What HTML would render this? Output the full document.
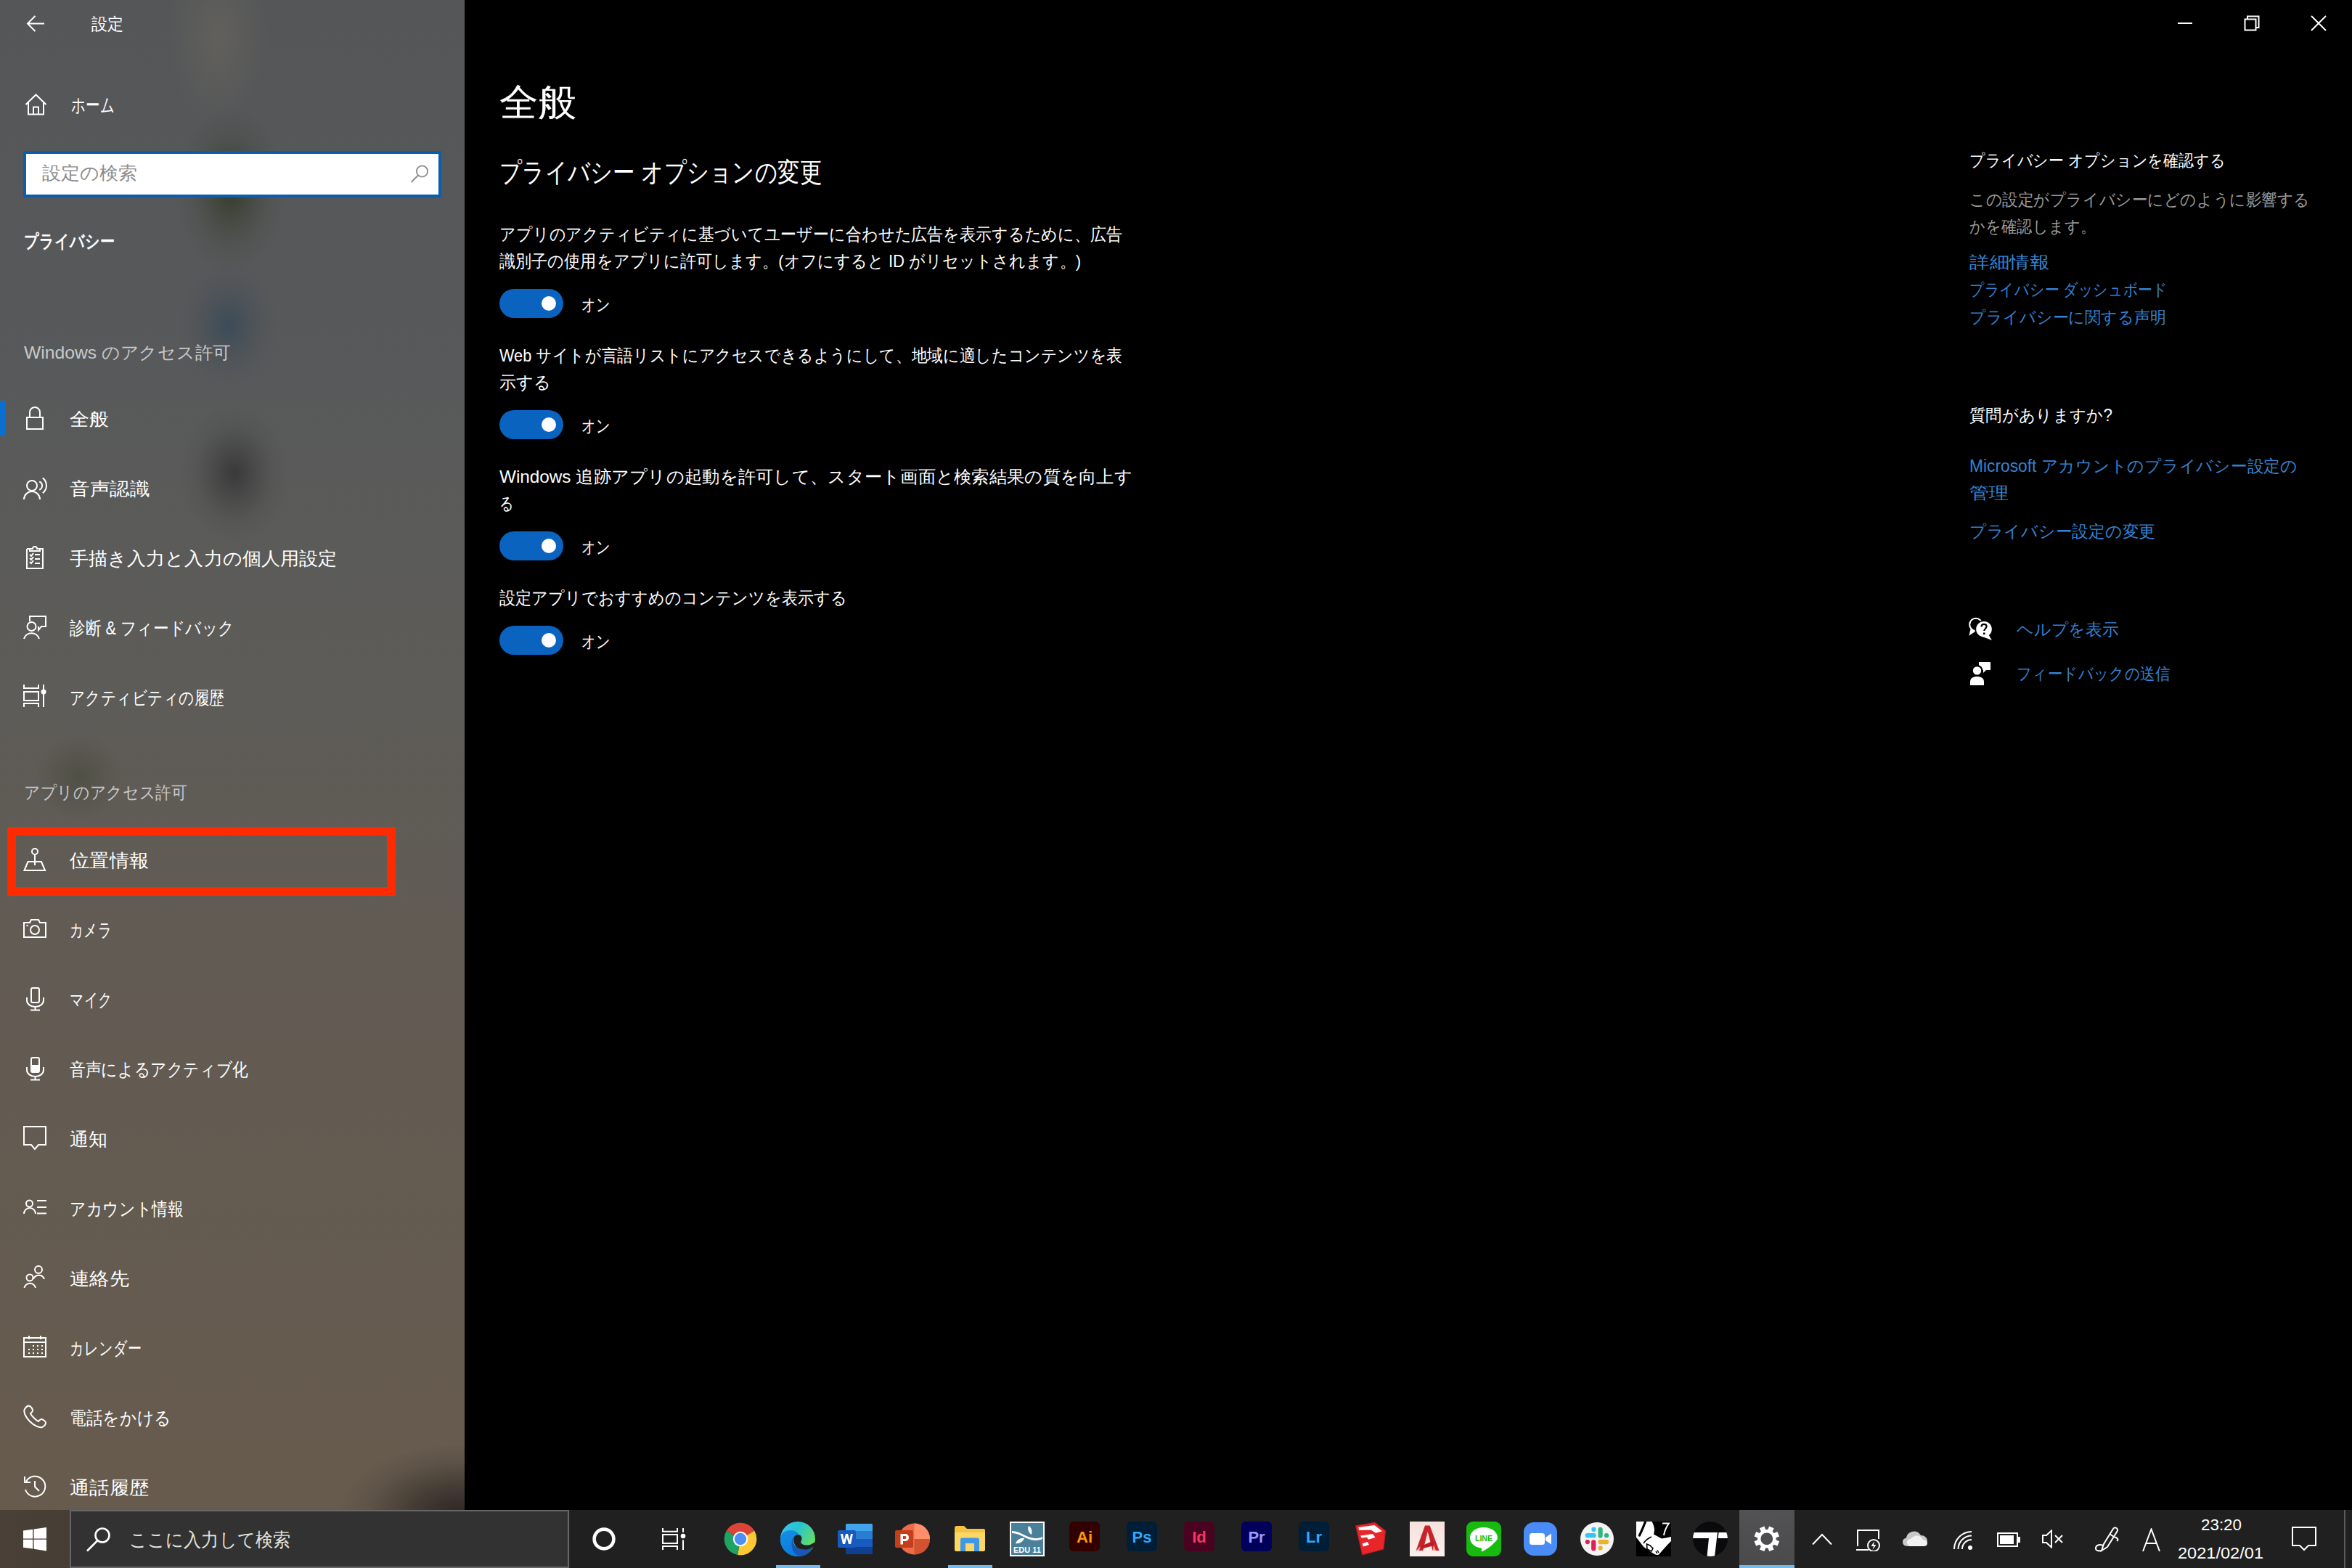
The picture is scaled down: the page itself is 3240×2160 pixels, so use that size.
<!DOCTYPE html>
<html lang="ja">
<head>
<meta charset="utf-8">
<title>設定</title>
<style>
*{margin:0;padding:0;box-sizing:border-box}
html,body{width:3240px;height:2160px;overflow:hidden;background:#000}
body{font-family:"Liberation Sans",sans-serif;color:#fff;position:relative}
.abs{position:absolute}
.t{position:absolute;white-space:nowrap;transform-origin:0 50%}
#sidebar{position:absolute;left:0;top:0;width:640px;height:2080px;overflow:hidden;
background:
radial-gradient(ellipse 75px 115px at 318px 262px, rgba(44,52,30,.75), rgba(44,52,30,.35) 40%, rgba(44,52,30,.1) 70%, rgba(44,52,30,0)),
radial-gradient(ellipse 72px 90px at 315px 448px, rgba(38,64,86,.55), rgba(38,64,86,.25) 40%, rgba(38,64,86,.08) 70%, rgba(38,64,86,0)),
radial-gradient(ellipse 75px 95px at 323px 652px, rgba(36,36,36,.6), rgba(36,36,36,.28) 40%, rgba(36,36,36,.08) 70%, rgba(36,36,36,0)),
radial-gradient(ellipse 60px 60px at 108px 1070px, rgba(58,62,42,.4), rgba(58,62,42,0)),
radial-gradient(ellipse 70px 120px at 300px 50px, rgba(122,114,96,.35), rgba(122,114,96,0)),
radial-gradient(ellipse 170px 100px at 635px 2088px, rgba(40,35,32,.95), rgba(40,35,32,.55) 40%, rgba(40,35,32,.15) 75%, rgba(40,35,32,0)),
linear-gradient(180deg,#545658 0%,#58595a 25%,#5d5c58 45%,#625b53 65%,#675b4d 100%);
}
#main{position:absolute;left:640px;top:0;width:2600px;height:2080px;background:#000}
#taskbar{position:absolute;left:0;top:2080px;width:3240px;height:80px;
background:linear-gradient(90deg,#4a4037 0px,#463d35 96px,#2a2724 784px,#202020 786px,#202020 100%)}
.tog{position:absolute;left:688px;width:88px;height:40px;border-radius:20px;background:#0b63c0}
.tog::after{content:"";position:absolute;left:58px;top:10px;width:20px;height:20px;border-radius:50%;background:#fff}
</style>
</head>
<body>
<div id="sidebar"></div>
<div id="main"></div>
<div id="taskbar"></div>
<div class="abs" style="left:32px;top:208px;width:576px;height:64px;background:#fff;border:4px solid #0a5ead"></div>
<svg class="abs" style="left:562px;top:225px" width="30" height="30" viewBox="0 0 30 30" ><circle cx="19.5" cy="11" r="7.6" stroke="#8a8a8a" fill="none" stroke-width="1.8"/><path d="M14,16.5 L4.5,26" stroke="#8a8a8a" stroke-width="1.8"/></svg>
<div class="abs" style="left:0;top:552px;width:8px;height:48px;background:#0b6fcf"></div>
<div class="abs" style="left:10px;top:1139px;width:535px;height:95px;border:12px solid #ff2a00"></div>
<svg class="abs" style="left:36px;top:21px" width="25" height="23" viewBox="0 0 25 23" ><path stroke="#fff" fill="none" stroke-width="2" d="M25,11.5 H2 M12.5,1 L2,11.5 L12.5,22"/></svg>
<svg class="abs" style="left:34px;top:129px" width="31" height="30" viewBox="0 0 31 30" ><path stroke="#fff" fill="none" stroke-width="2" stroke-width="2.6" d="M1.5,15 L15.5,1.5 L29.5,15 M5,11.5 V28.5 H26 V11.5 M12,28.5 V18.5 H19 V28.5"/></svg>
<svg class="abs" style="left:32px;top:560px" width="32" height="33" viewBox="0 0 32 33" ><rect stroke="#fff" fill="none" stroke-width="2" x="5" y="15" width="22" height="16"/><path stroke="#fff" fill="none" stroke-width="2" d="M9,15 V8 A7,7 0 0 1 23,8 V15"/></svg>
<svg class="abs" style="left:32px;top:656px" width="34" height="34" viewBox="0 0 34 34" ><circle stroke="#fff" fill="none" stroke-width="2" cx="12" cy="13" r="7"/><path stroke="#fff" fill="none" stroke-width="2" d="M1,32 A11,11 0 0 1 23,32"/><path stroke="#fff" fill="none" stroke-width="2" d="M22.2,7.5 A6,6 0 0 1 22.2,18.7 M26.8,2.4 A13.2,13.2 0 0 1 26.8,23.3"/></svg>
<svg class="abs" style="left:32px;top:752px" width="32" height="33" viewBox="0 0 32 33" ><path stroke="#fff" fill="none" stroke-width="2" d="M5,4 H9 M23,4 H27 V31 H5 V4"/><path stroke="#fff" fill="none" stroke-width="2" d="M9,7 V4 H13 A3,3 0 0 1 19,4 H23 V7 Z"/><path stroke="#fff" fill="none" stroke-width="2" d="M9,12 L11,14 L14,10 M9,17 L11,19 L14,15 M9,22 L11,24 L14,20 M16,12 H23 M16,18 H23 M16,24 H23"/></svg>
<svg class="abs" style="left:32px;top:848px" width="32" height="33" viewBox="0 0 32 33" ><path stroke="#fff" fill="none" stroke-width="2" d="M9,8 V1 H31 V15 H25 L21,20 V15"/><circle stroke="#fff" fill="none" stroke-width="2" cx="11.5" cy="15" r="6"/><path stroke="#fff" fill="none" stroke-width="2" d="M1,32 A11,11 0 0 1 22,32"/></svg>
<svg class="abs" style="left:32px;top:943px" width="33" height="32" viewBox="0 0 33 32" ><path stroke="#fff" fill="none" stroke-width="2" d="M1,0 V5 H21 V0 M1,31 V26 H21 V31"/><rect stroke="#fff" fill="none" stroke-width="2" x="1" y="10" width="20" height="12"/><path stroke="#fff" fill="none" stroke-width="2" d="M28,0 V31"/><circle cx="28" cy="10" r="3.5" fill="#fff"/></svg>
<svg class="abs" style="left:32px;top:1167px" width="32" height="34" viewBox="0 0 32 34" ><circle stroke="#fff" fill="none" stroke-width="2" cx="16" cy="6" r="4"/><path stroke="#fff" fill="none" stroke-width="2" d="M16,10 V25"/><path stroke="#fff" fill="none" stroke-width="2" d="M1.5,32 H30 L25,20 H6.5 Z"/></svg>
<svg class="abs" style="left:32px;top:1264px" width="33" height="30" viewBox="0 0 33 30" ><path stroke="#fff" fill="none" stroke-width="2" d="M1,7 H9 L11,3 H21 L23,7 H31 V27 H1 Z"/><circle stroke="#fff" fill="none" stroke-width="2" cx="16" cy="17" r="6"/><circle cx="5.5" cy="11" r="1.2" fill="#fff"/></svg>
<svg class="abs" style="left:32px;top:1359px" width="32" height="34" viewBox="0 0 32 34" ><rect stroke="#fff" fill="none" stroke-width="2" x="11" y="2" width="11" height="20" rx="2"/><path stroke="#fff" fill="none" stroke-width="2" d="M5,15 V19 A11.5,9 0 0 0 28,19 V15 M16.5,28 V32 M10,32.5 H23"/></svg>
<svg class="abs" style="left:32px;top:1455px" width="32" height="34" viewBox="0 0 32 34" ><rect stroke="#fff" fill="none" stroke-width="2" x="11" y="2" width="11" height="20" rx="2"/><rect x="11" y="12" width="11" height="10" fill="#fff"/><path stroke="#fff" fill="none" stroke-width="2" d="M5,15 V19 A11.5,9 0 0 0 28,19 V15 M16.5,28 V32 M10,32.5 H23"/></svg>
<svg class="abs" style="left:32px;top:1551px" width="33" height="34" viewBox="0 0 33 34" ><path stroke="#fff" fill="none" stroke-width="2" d="M1,1 H31 V26 H21 L16,32 L11,26 H1 Z"/></svg>
<svg class="abs" style="left:32px;top:1646px" width="33" height="28" viewBox="0 0 33 28" ><circle stroke="#fff" fill="none" stroke-width="2" cx="8.5" cy="12" r="4.5"/><path stroke="#fff" fill="none" stroke-width="2" d="M1,26 A8,8 0 0 1 17,26"/><path stroke="#fff" fill="none" stroke-width="2" d="M19,8 H32 M19,17 H32 M19,25.5 H32"/></svg>
<svg class="abs" style="left:32px;top:1742px" width="32" height="33" viewBox="0 0 32 33" ><circle stroke="#fff" fill="none" stroke-width="2" cx="21" cy="7" r="5"/><path stroke="#fff" fill="none" stroke-width="2" d="M14,20 A8,8 0 0 1 29,20"/><circle stroke="#fff" fill="none" stroke-width="2" cx="9" cy="18" r="4.5"/><path stroke="#fff" fill="none" stroke-width="2" d="M1.5,32 A8,8 0 0 1 17,32"/></svg>
<svg class="abs" style="left:32px;top:1839px" width="33" height="32" viewBox="0 0 33 32" ><rect stroke="#fff" fill="none" stroke-width="2" x="1" y="4" width="30" height="26"/><path stroke="#fff" fill="none" stroke-width="2" d="M1,10 H31 M8,1 V6 M24,1 V6"/><rect x="7" y="19" width="2" height="2" fill="#fff"/><rect x="7" y="24" width="2" height="2" fill="#fff"/><rect x="13" y="14" width="2" height="2" fill="#fff"/><rect x="13" y="19" width="2" height="2" fill="#fff"/><rect x="13" y="24" width="2" height="2" fill="#fff"/><rect x="19" y="14" width="2" height="2" fill="#fff"/><rect x="19" y="19" width="2" height="2" fill="#fff"/><rect x="19" y="24" width="2" height="2" fill="#fff"/><rect x="25" y="14" width="2" height="2" fill="#fff"/><rect x="25" y="19" width="2" height="2" fill="#fff"/><rect x="25" y="24" width="2" height="2" fill="#fff"/></svg>
<svg class="abs" style="left:32px;top:1935px" width="33" height="34" viewBox="0 0 33 34" ><path stroke="#fff" fill="none" stroke-width="2" d="M9,2 C7,1 4,3 2,6 C0,10 3,17 9,23 C15,29 22,32 26,31 C29,30 31,27 31,25 C31,23 27,20 25,20 C23,20 22,22 21,23 C18,22 11,15 10,12 C11,11 13,10 13,8 C13,6 11,3 9,2 Z"/></svg>
<svg class="abs" style="left:32px;top:2031px" width="33" height="34" viewBox="0 0 33 34" ><path stroke="#fff" fill="none" stroke-width="2" d="M4,10 A14,14 0 1 1 3,21"/><path stroke="#fff" fill="none" stroke-width="2" d="M2,3 V11 H10"/><path stroke="#fff" fill="none" stroke-width="2" d="M16,9 V17 L22,23"/></svg>
<div class="abs" style="left:3000px;top:31px;width:20px;height:2px;background:#fff"></div>
<svg class="abs" style="left:3091px;top:21px" width="22" height="22" viewBox="0 0 22 22" ><path d="M5,5 V1.5 H20.5 V17 H17" stroke="#fff" fill="none" stroke-width="2"/><rect x="1.5" y="5.5" width="15" height="15" stroke="#fff" fill="none" stroke-width="2"/></svg>
<svg class="abs" style="left:3183px;top:21px" width="22" height="22" viewBox="0 0 22 22" ><path d="M1,1 L21,21 M21,1 L1,21" stroke="#fff" stroke-width="2"/></svg>
<div class="tog" style="top:398px"></div>
<div class="tog" style="top:565px"></div>
<div class="tog" style="top:732px"></div>
<div class="tog" style="top:862px"></div>
<svg class="abs" style="left:2700px;top:840px" width="60" height="110" viewBox="0 0 60 110" ><circle cx="21.8" cy="20.4" r="8.6" stroke="#fff" fill="none" stroke-width="2"/><path d="M15,25 L12.3,35.8 L21,30 Z" fill="#fff"/><circle cx="33" cy="26.7" r="12.5" fill="#000"/><circle cx="33" cy="26.7" r="10.8" fill="#fff"/><path d="M38,32 L43.9,42.1 L31,37 Z" fill="#fff"/><path d="M29.5,23.5 C29.5,21 31,19.8 33,19.8 C35,19.8 36.6,21 36.6,23 C36.6,25.5 33.5,26 33.3,29" stroke="#000" stroke-width="2.2" fill="none"/><rect x="32" y="31.5" width="2.6" height="2.6" fill="#000"/><path d="M26,72 H42 V83 H36 L32,87 V83 H26 Z" fill="#fff"/><circle cx="23.5" cy="83.9" r="8" fill="#000"/><circle cx="23.5" cy="83.9" r="5.7" fill="#fff"/><path d="M14,104 V99 C14,94.5 18,92 23.5,92 C29,92 33,94.5 33,99 V104 Z" fill="#fff"/></svg>
<svg class="abs" style="left:32px;top:2104px" width="32" height="33" viewBox="0 0 32 33" ><path fill="#fff" d="M0,4.6 L13.2,2.8 V15.4 H0 Z M14.6,2.6 L32,0 V15.4 H14.6 Z M0,16.8 H13.2 V29.6 L0,27.8 Z M14.6,16.8 H32 V32.4 L14.6,29.8 Z"/></svg>
<div class="abs" style="left:96px;top:2080px;width:688px;height:80px;background:#323232;border:2px solid #676767"></div>
<svg class="abs" style="left:118px;top:2103px" width="36" height="36" viewBox="0 0 36 36" ><circle cx="23" cy="12" r="9.5" stroke="#fff" fill="none" stroke-width="2.6"/><path d="M16,19.5 L2,33.5" stroke="#fff" stroke-width="2.6"/></svg>
<svg class="abs" style="left:814px;top:2102px" width="36" height="36" viewBox="0 0 36 36" ><circle cx="18" cy="18" r="13.4" stroke="#fff" fill="none" stroke-width="4.6"/></svg>
<svg class="abs" style="left:911px;top:2104px" width="34" height="33" viewBox="0 0 34 33" ><path stroke="#fff" fill="none" stroke-width="2" stroke-width="2.2" d="M2,1 V5.8 H22 V1 M2,31 V26 H22 V31"/><rect stroke="#fff" fill="none" stroke-width="2" stroke-width="2.2" x="2" y="10" width="20" height="12"/><path stroke="#fff" fill="none" stroke-width="2" stroke-width="2.1" d="M30,1 V6.8 M30,17.5 V31"/><circle cx="30" cy="12" r="3.3" fill="#fff"/></svg>
<svg class="abs" style="left:997px;top:2097px" width="46" height="46" viewBox="0 0 46 46" ><path d="M23,23 L3.69,11.85 A22.3,22.3 0 0 1 42.31,11.85 Z" fill="#db4437"/><path d="M23,23 L42.31,11.85 A22.3,22.3 0 0 1 19.1,45 Z" fill="#fcc934"/><path d="M23,23 L19.1,45 A22.3,22.3 0 0 1 3.69,11.85 Z" fill="#1ea362"/><circle cx="23" cy="23" r="10.2" fill="#fff"/><circle cx="23" cy="23" r="8.2" fill="#4e8ef5"/></svg>
<svg class="abs" style="left:1075px;top:2096px" width="48" height="48" viewBox="0 0 48 48" ><defs><linearGradient id="eg1" x1="0" y1="0" x2="1" y2="0.6"><stop offset="0" stop-color="#3cc4f4"/><stop offset=".45" stop-color="#27c3d2"/><stop offset="1" stop-color="#6ae25a"/></linearGradient><linearGradient id="eg2" x1="0" y1="0" x2="0.6" y2="1"><stop offset="0" stop-color="#1490e6"/><stop offset="1" stop-color="#0b78dc"/></linearGradient></defs><circle cx="24" cy="24" r="24" fill="url(#eg1)"/><path d="M0.3,21 C2,15 8,12 14,12 C20,12 24,15 26,18.5 L19,21 C16,27 18,34 25,37 C32,40 40,38 44,36 C40,44 32,48 24,48 C11,48 0,38 0,25 Z" fill="url(#eg2)"/><path d="M19,21 C16,27 18,34 25,37 C32,40 40,38 44,36 C40,44 33,47.5 27,47.8 C20,46 16,40 15.5,32 C15.3,27 16.5,23 19,21 Z" fill="#1757b8"/><path d="M18.3,24.5 C18.3,20.5 21,18.3 24.3,18.3 C27.5,18.3 29.5,20.5 29.5,23.5 C29.5,26 27.8,27.2 28.3,29 C29.2,31.5 33,32.6 36,32.6 C40,32.6 43,31.5 46.5,29 L50,27 L50,39 L44.5,35.5 C40,38.5 32,40 25,37 C20.5,35 18.3,30 18.3,24.5 Z" fill="#202020"/></svg>
<div class="abs" style="left:1069px;top:2156px;width:61px;height:4px;background:#76b9ed"></div>
<svg class="abs" style="left:1153px;top:2098px" width="50" height="44" viewBox="0 0 50 44" ><rect x="12" y="1" width="37" height="42" rx="2" fill="#2b6fd6"/><rect x="12" y="1" width="37" height="11" rx="2" fill="#41a5ee"/><rect x="12" y="11" width="37" height="11" fill="#2b7cd3"/><rect x="12" y="22" width="37" height="11" fill="#185abd"/><rect x="12" y="33" width="37" height="10" fill="#103f91"/><rect x="1" y="10" width="25" height="24" rx="2" fill="#185abd"/><path d="M5,15 L8,29 H11 L13.5,20 L16,29 H19 L22,15 H19 L17.3,24 L15,15 H12 L9.7,24 L8,15 Z" fill="#fff"/></svg>
<svg class="abs" style="left:1232px;top:2098px" width="50" height="44" viewBox="0 0 50 44" ><circle cx="27.5" cy="22" r="21.5" fill="#ed6c47"/><path d="M27.5,0.5 A21.5,21.5 0 0 1 49,22 H27.5 Z" fill="#ff8f6b"/><path d="M49,22 A21.5,21.5 0 0 1 27.5,43.5 V22 Z" fill="#d35230"/><rect x="1" y="10" width="25" height="24" rx="2" fill="#c43e1c"/><path d="M8.5,15 H14.5 C18,15 20,17 20,20 C20,23 18,25 14.5,25 H12 V29.5 H8.5 Z M12,18 V22 H14.3 C15.7,22 16.5,21.3 16.5,20 C16.5,18.7 15.7,18 14.3,18 Z" fill="#fff"/></svg>
<svg class="abs" style="left:1314px;top:2101px" width="44" height="37" viewBox="0 0 44 37" ><path d="M1,4 C1,2 2,1 4,1 H14 L18,5 H41 C42.5,5 43,6 43,7.5 V33 C43,35 42,36 40,36 H4 C2,36 1,35 1,33 Z" fill="#f5c242"/><path d="M1,10 H43 V33 C43,35 42,36 40,36 H4 C2,36 1,35 1,33 Z" fill="#fcd766"/><path d="M9,36 V20 C9,18.5 10,17.5 11.5,17.5 H32.5 C34,17.5 35,18.5 35,20 V36 H28 V25 H16 V36 Z" fill="#3e98e6"/></svg>
<div class="abs" style="left:1306px;top:2156px;width:61px;height:4px;background:#76b9ed"></div>
<svg class="abs" style="left:1391px;top:2096px" width="48" height="48" viewBox="0 0 48 48" ><rect x="1" y="1" width="46" height="46" fill="#4b809b" stroke="#fff" stroke-width="2"/><path d="M3,13 C15,13 22,22 34,23 C40,23.5 43,22 45,21 V24 C42,25.5 38,26 34,26 C22,25 15,16 3,16 Z" fill="#fff"/><path d="M26,6 C30,8 31,13 30,18 C26,16 24,10 26,6 Z" fill="#fff"/><path d="M8,30 C10,25 15,22 20,23 C18,28 13,31 8,30 Z" fill="#fff"/><text x="24" y="43" font-family="Liberation Sans" font-size="11" font-weight="700" fill="#fff" text-anchor="middle">EDU 11</text></svg>
<svg class="abs" style="left:1473px;top:2096px" width="42" height="41" viewBox="0 0 42 41" ><rect x="0" y="0" width="42" height="41" rx="6" fill="#330000"/><text x="21" y="29" font-family="Liberation Sans" font-size="22" font-weight="700" fill="#ff9a00" text-anchor="middle">Ai</text></svg>
<svg class="abs" style="left:1552px;top:2096px" width="42" height="41" viewBox="0 0 42 41" ><rect x="0" y="0" width="42" height="41" rx="6" fill="#001e36"/><text x="21" y="29" font-family="Liberation Sans" font-size="22" font-weight="700" fill="#31a8ff" text-anchor="middle">Ps</text></svg>
<svg class="abs" style="left:1631px;top:2096px" width="42" height="41" viewBox="0 0 42 41" ><rect x="0" y="0" width="42" height="41" rx="6" fill="#49021f"/><text x="21" y="29" font-family="Liberation Sans" font-size="22" font-weight="700" fill="#ff3366" text-anchor="middle">Id</text></svg>
<svg class="abs" style="left:1710px;top:2096px" width="42" height="41" viewBox="0 0 42 41" ><rect x="0" y="0" width="42" height="41" rx="6" fill="#00005b"/><text x="21" y="29" font-family="Liberation Sans" font-size="22" font-weight="700" fill="#9999ff" text-anchor="middle">Pr</text></svg>
<svg class="abs" style="left:1789px;top:2096px" width="42" height="41" viewBox="0 0 42 41" ><rect x="0" y="0" width="42" height="41" rx="6" fill="#001e36"/><text x="21" y="29" font-family="Liberation Sans" font-size="22" font-weight="700" fill="#31a8ff" text-anchor="middle">Lr</text></svg>
<svg class="abs" style="left:1860px;top:2090px" width="50" height="54" viewBox="0 0 50 54" ><path d="M7.7,11.9 L33.9,7.4 L48.5,19 L45.8,44 L16.7,51.8 Z" fill="#e8262a"/><path d="M7.7,11.9 L33.9,7.4 L48.5,19 L45.8,44 L16.7,51.8 Z" fill="none" stroke="#b81d20" stroke-width="1.2"/><path d="M11.3,14 L33.3,11 L44,19.3 L35.1,21.7 L28.6,17.6 L12.2,17.9 Z M14.3,25.6 L31,22.9 L34.5,28 L25,30.7 L23.2,27.7 L15.5,28.6 Z M16.7,36.3 L23.8,33.9 L25.9,38.1 L17.9,40.5 Z" fill="#fff"/></svg>
<svg class="abs" style="left:1942px;top:2096px" width="48" height="48" viewBox="0 0 48 48" ><defs><linearGradient id="acg" x1="0" y1="0" x2="0" y2="1"><stop offset="0" stop-color="#f6e1dc"/><stop offset="1" stop-color="#fbefec"/></linearGradient></defs><rect width="48" height="48" fill="url(#acg)"/><path d="M8.6,40 L21,5.4 H27.6 L40.5,40 H31.5 L24.7,14 L18.3,40 Z" fill="#c8232b"/><path d="M15.5,34 L31,27 L33.5,33 L14.5,38 Z" fill="#b51f26"/><path d="M8.6,40 L13,40 L15,34 Z M31.5,40 H36 L33,32 Z" fill="#e8a39f"/></svg>
<svg class="abs" style="left:2020px;top:2096px" width="48" height="48" viewBox="0 0 48 48" ><rect width="48" height="48" rx="9" fill="#16bb0e"/><path d="M24,8 C13,8 5,14.5 5,22.5 C5,29.5 11,35 20,36.5 C21,36.7 21.5,37.5 21,39 C20.6,40.5 20.5,41.5 22,41 C25,40 33,35 37,30.5 C40.5,27.5 43,25 43,22.5 C43,14.5 35,8 24,8 Z" fill="#fff"/><text x="24" y="27" font-family="Liberation Sans" font-size="10.5" font-weight="700" fill="#16bb0e" text-anchor="middle">LINE</text></svg>
<svg class="abs" style="left:2099px;top:2097px" width="46" height="46" viewBox="0 0 46 46" ><rect width="46" height="46" rx="14" fill="#4a8cf6"/><rect x="8" y="15" width="21" height="16" rx="3.5" fill="#fff"/><path d="M30,21 L38,15.5 V30.5 L30,25 Z" fill="#fff"/></svg>
<svg class="abs" style="left:2177px;top:2097px" width="46" height="46" viewBox="0 0 46 46" ><circle cx="23" cy="23" r="23" fill="#f4f4f4"/><path d="M9.8,18.2 L18.6,18.2" stroke="#36c5f0" stroke-width="6.2" stroke-linecap="round"/><path d="M18.4,9.8 L18.4,9.9" stroke="#36c5f0" stroke-width="6.2" stroke-linecap="round"/><path d="M27.6,9.8 L27.6,18.6" stroke="#2eb67d" stroke-width="6.2" stroke-linecap="round"/><path d="M36,18.2 L36.1,18.2" stroke="#2eb67d" stroke-width="6.2" stroke-linecap="round"/><path d="M27.4,27.1 L36.2,27.1" stroke="#ecb22e" stroke-width="6.2" stroke-linecap="round"/><path d="M27.6,35.5 L27.7,35.5" stroke="#ecb22e" stroke-width="6.2" stroke-linecap="round"/><path d="M18.2,27.4 L18.2,36.2" stroke="#e01e5a" stroke-width="6.2" stroke-linecap="round"/><path d="M9.8,27.1 L9.9,27.1" stroke="#e01e5a" stroke-width="6.2" stroke-linecap="round"/></svg>
<svg class="abs" style="left:2254px;top:2096px" width="48" height="48" viewBox="0 0 48 48" ><rect width="48" height="48" fill="#000"/><path d="M0,0 H21.5 C25,6 26,12 24,17.5 C27,19.5 31,21 35,23.5 C39,23 43,22 48,21 V27 C42,33 36,40 31,45.5 C28,47 25,45 22,43 C17,40 13,37 10,34.5 C6,30 3,25 0,22 Z" fill="#fff"/><path d="M12.5,0.5 C10,7 7.5,13 4.5,19" stroke="#000" stroke-width="3.2" fill="none" stroke-linecap="round"/><path d="M10,30 C12,27 14,24 21,21 M14.5,31 L15,38 L21,41 L23,37 L19,33 Z" stroke="#000" stroke-width="1.6" fill="none"/><path d="M27,41 L29,44 M29,39.5 L31,43" stroke="#000" stroke-width="1.4"/><path d="M36,2.5 H45 C41,8 39,13 38,19" stroke="#fff" stroke-width="2" fill="none"/></svg>
<svg class="abs" style="left:2332px;top:2096px" width="48" height="48" viewBox="0 0 48 48" ><defs><clipPath id="tc"><circle cx="24" cy="24" r="24"/></clipPath></defs><circle cx="24" cy="24" r="24" fill="#0a0a0c"/><g clip-path="url(#tc)" fill="#fff"><path d="M0,15 H34 L33,23 H0 Z"/><path d="M22,23 H33 L30,48 H19.5 Z"/><path d="M35.6,15 H48 V23 H34.6 Z"/></g></svg>
<div class="abs" style="left:2396px;top:2080px;width:76px;height:80px;background:linear-gradient(180deg,#525254,#4a4a4c)"></div>
<div class="abs" style="left:2396px;top:2156px;width:76px;height:4px;background:#76b9ed"></div>
<svg class="abs" style="left:2414px;top:2100px" width="40" height="40" viewBox="0 0 40 40" ><path fill="#fff" fill-rule="evenodd" d="M32.50,21.37 L37.07,23.17 L34.40,29.63 L29.89,27.68 L27.68,29.89 L29.63,34.40 L23.17,37.07 L21.37,32.50 L18.23,32.50 L16.43,37.07 L9.97,34.40 L11.92,29.89 L9.71,27.68 L5.20,29.63 L2.53,23.17 L7.10,21.37 L7.10,18.23 L2.53,16.43 L5.20,9.97 L9.71,11.92 L11.92,9.71 L9.97,5.20 L16.43,2.53 L18.23,7.10 L21.37,7.10 L23.17,2.53 L29.63,5.20 L27.68,9.71 L29.89,11.92 L34.40,9.97 L37.07,16.43 L32.50,18.23 Z M28.200000000000003,19.8 A8.4,8.4 0 1 0 11.4,19.8 A8.4,8.4 0 1 0 28.200000000000003,19.8 Z"/></svg>
<svg class="abs" style="left:2496px;top:2111px" width="28" height="18" viewBox="0 0 28 18" ><path stroke="#fff" fill="none" stroke-width="2" stroke-width="2.2" d="M1,16.5 L14,3 L27,16.5"/></svg>
<svg class="abs" style="left:2557px;top:2107px" width="34" height="30" viewBox="0 0 34 30" ><path stroke="#fff" fill="none" stroke-width="2" d="M2,23 V1 H31 V13"/><path stroke="#fff" fill="none" stroke-width="2" d="M0,28 H17"/><circle cx="24" cy="22" r="8" fill="#202020" stroke="#fff" stroke-width="2"/><path d="M25,16 L20.5,23 H24 L22.5,28 L27.5,21 H24 Z" fill="#fff"/></svg>
<svg class="abs" style="left:2620px;top:2108px" width="36" height="24" viewBox="0 0 36 24" ><path d="M8,22 C3,22 1,19 1,16 C1,13 3,11 6,10.5 C7,5 11,1.5 17,1.5 C21,1.5 24,3.5 26,7 C31,7 35,10 35,15 C35,19 32,22 28,22 Z" fill="#c8c8c8"/><path d="M14,22 C10,22 7,20 7,17 C7,14 9,12 12,12 C14,9 17,7.5 21,7.5 C25,7.5 28,10 29,13 C32,13 35,15.5 35,18 C35,20.5 33,22 30,22 Z" fill="#f2f2f2"/></svg>
<svg class="abs" style="left:2690px;top:2108px" width="30" height="28" viewBox="0 0 30 28" ><path stroke="#fff" fill="none" stroke-width="2" stroke-width="2.2" d="M2,26 A24,24 0 0 1 26,2 M7.5,26 A18.5,18.5 0 0 1 26,7.5 M13,26 A13,13 0 0 1 26,13"/><circle cx="24" cy="24" r="3" fill="#fff"/></svg>
<svg class="abs" style="left:2751px;top:2111px" width="32" height="20" viewBox="0 0 32 20" ><rect stroke="#fff" fill="none" stroke-width="2" x="1" y="1" width="27" height="18"/><rect x="4" y="4" width="19" height="12" fill="#fff"/><rect x="28.5" y="6" width="3.5" height="8" fill="#fff"/></svg>
<svg class="abs" style="left:2812px;top:2107px" width="32" height="26" viewBox="0 0 32 26" ><path stroke="#fff" fill="none" stroke-width="2" d="M2,8 H7 L14,1.5 V24.5 L7,18 H2 Z"/><path stroke="#fff" fill="none" stroke-width="2" d="M19,8 L29,18 M29,8 L19,18"/></svg>
<svg class="abs" style="left:2884px;top:2103px" width="36" height="35" viewBox="0 0 36 35" ><path stroke="#fff" fill="none" stroke-width="2" d="M11,33 L14,24 L27,3 C28,1.5 30,1 31.5,2 C33,3 33.5,5 32.5,6.5 L19,28 Z M22,10 L28,14 M13,26 C9,24 4,25 3,29 C2,33 7,34 10,33"/><path stroke="#fff" fill="none" stroke-width="2" d="M28,14 C33,15 35,18 32,20"/></svg>
<svg class="abs" style="left:2950px;top:2105px" width="27" height="33" viewBox="0 0 27 33" ><path d="M2,32 L13.5,1.5 L25,32 M6.5,21 H20.5" stroke="#fff" fill="none" stroke-width="2"/></svg>
<svg class="abs" style="left:3157px;top:2103px" width="34" height="35" viewBox="0 0 34 35" ><path stroke="#fff" fill="none" stroke-width="2" d="M1,1 H33 V26 H23 L17,32 L11,26 H1 Z"/></svg>
<div class="abs" style="left:3229px;top:2080px;width:2px;height:80px;background:#5a5a5a"></div>
<div class="t" style="left:126px;top:22.0px;font-size:23px;line-height:23px;color:#ffffff;font-weight:400;transform:scaleX(0.9565)">設定</div>
<div class="t" style="left:98px;top:132.0px;font-size:27px;line-height:27px;color:#ffffff;font-weight:400;transform:scaleX(0.7229)">ホーム</div>
<div class="t" style="left:58px;top:226.0px;font-size:25px;line-height:25px;color:#8c8c8c;font-weight:400;transform:scaleX(1.0397)">設定の検索</div>
<div class="t" style="left:33px;top:320.0px;font-size:25px;line-height:25px;color:#ffffff;font-weight:700;transform:scaleX(0.8065)">プライバシー</div>
<div class="t" style="left:33px;top:474.0px;font-size:24px;line-height:24px;color:#c9c9c9;font-weight:400;transform:scaleX(1.0288)">Windows のアクセス許可</div>
<div class="t" style="left:96px;top:565.0px;font-size:25px;line-height:25px;color:#ffffff;font-weight:400;transform:scaleX(1.0800)">全般</div>
<div class="t" style="left:96px;top:661.0px;font-size:25px;line-height:25px;color:#ffffff;font-weight:400;transform:scaleX(1.1000)">音声認識</div>
<div class="t" style="left:96px;top:757.0px;font-size:25px;line-height:25px;color:#ffffff;font-weight:400;transform:scaleX(1.0425)">手描き入力と入力の個人用設定</div>
<div class="t" style="left:96px;top:853.0px;font-size:25px;line-height:25px;color:#ffffff;font-weight:400;transform:scaleX(0.8678)">診断 &amp; フィードバック</div>
<div class="t" style="left:96px;top:949.0px;font-size:25px;line-height:25px;color:#ffffff;font-weight:400;transform:scaleX(0.8256)">アクティビティの履歴</div>
<div class="t" style="left:33px;top:1080.0px;font-size:24px;line-height:24px;color:#c9c9c9;font-weight:400;transform:scaleX(0.9073)">アプリのアクセス許可</div>
<div class="t" style="left:96px;top:1173.0px;font-size:25px;line-height:25px;color:#ffffff;font-weight:400;transform:scaleX(1.0900)">位置情報</div>
<div class="t" style="left:96px;top:1269.0px;font-size:25px;line-height:25px;color:#ffffff;font-weight:400;transform:scaleX(0.7436)">カメラ</div>
<div class="t" style="left:96px;top:1365.0px;font-size:25px;line-height:25px;color:#ffffff;font-weight:400;transform:scaleX(0.7564)">マイク</div>
<div class="t" style="left:96px;top:1461.0px;font-size:25px;line-height:25px;color:#ffffff;font-weight:400;transform:scaleX(0.8693)">音声によるアクティブ化</div>
<div class="t" style="left:96px;top:1557.0px;font-size:25px;line-height:25px;color:#ffffff;font-weight:400;transform:scaleX(1.0400)">通知</div>
<div class="t" style="left:96px;top:1653.0px;font-size:25px;line-height:25px;color:#ffffff;font-weight:400;transform:scaleX(0.8722)">アカウント情報</div>
<div class="t" style="left:96px;top:1749.0px;font-size:25px;line-height:25px;color:#ffffff;font-weight:400;transform:scaleX(1.0933)">連絡先</div>
<div class="t" style="left:96px;top:1845.0px;font-size:25px;line-height:25px;color:#ffffff;font-weight:400;transform:scaleX(0.7674)">カレンダー</div>
<div class="t" style="left:96px;top:1941.0px;font-size:25px;line-height:25px;color:#ffffff;font-weight:400;transform:scaleX(0.9091)">電話をかける</div>
<div class="t" style="left:96px;top:2037.0px;font-size:25px;line-height:25px;color:#ffffff;font-weight:400;transform:scaleX(1.0900)">通話履歴</div>
<div class="t" style="left:688px;top:115.0px;font-size:52px;line-height:52px;color:#ffffff;font-weight:400;transform:scaleX(1.0288)">全般</div>
<div class="t" style="left:688px;top:219.0px;font-size:37px;line-height:37px;color:#ffffff;font-weight:400;transform:scaleX(0.8233)">プライバシー オプションの変更</div>
<div class="t" style="left:688px;top:311.0px;font-size:24px;line-height:24px;color:#ffffff;font-weight:400;transform:scaleX(0.9137)">アプリのアクティビティに基づいてユーザーに合わせた広告を表示するために、広告</div>
<div class="t" style="left:688px;top:348.0px;font-size:24px;line-height:24px;color:#ffffff;font-weight:400;transform:scaleX(0.9214)">識別子の使用をアプリに許可します。(オフにすると ID がリセットされます。)</div>
<div class="t" style="left:801px;top:408.0px;font-size:24px;line-height:24px;color:#ffffff;font-weight:400;transform:scaleX(0.8000)">オン</div>
<div class="t" style="left:688px;top:478.0px;font-size:24px;line-height:24px;color:#ffffff;font-weight:400;transform:scaleX(0.9045)">Web サイトが言語リストにアクセスできるようにして、地域に適したコンテンツを表</div>
<div class="t" style="left:688px;top:515.0px;font-size:24px;line-height:24px;color:#ffffff;font-weight:400;transform:scaleX(0.9595)">示する</div>
<div class="t" style="left:801px;top:575.0px;font-size:24px;line-height:24px;color:#ffffff;font-weight:400;transform:scaleX(0.8000)">オン</div>
<div class="t" style="left:688px;top:645.0px;font-size:24px;line-height:24px;color:#ffffff;font-weight:400;transform:scaleX(1.0116)">Windows 追跡アプリの起動を許可して、スタート画面と検索結果の質を向上す</div>
<div class="t" style="left:688px;top:682.0px;font-size:24px;line-height:24px;color:#ffffff;font-weight:400;transform:scaleX(0.8000)">る</div>
<div class="t" style="left:801px;top:742.0px;font-size:24px;line-height:24px;color:#ffffff;font-weight:400;transform:scaleX(0.8000)">オン</div>
<div class="t" style="left:688px;top:812.0px;font-size:24px;line-height:24px;color:#ffffff;font-weight:400;transform:scaleX(0.9194)">設定アプリでおすすめのコンテンツを表示する</div>
<div class="t" style="left:801px;top:872.0px;font-size:24px;line-height:24px;color:#ffffff;font-weight:400;transform:scaleX(0.8000)">オン</div>
<div class="t" style="left:2713px;top:210.0px;font-size:23px;line-height:23px;color:#ffffff;font-weight:400;transform:scaleX(0.9112)">プライバシー オプションを確認する</div>
<div class="t" style="left:2713px;top:264.0px;font-size:23px;line-height:23px;color:#9a9a9a;font-weight:400;transform:scaleX(0.9399)">この設定がプライバシーにどのように影響する</div>
<div class="t" style="left:2713px;top:301.0px;font-size:23px;line-height:23px;color:#9a9a9a;font-weight:400;transform:scaleX(0.9206)">かを確認します。</div>
<div class="t" style="left:2713px;top:350.0px;font-size:23px;line-height:23px;color:#3483d2;font-weight:400;transform:scaleX(1.1957)">詳細情報</div>
<div class="t" style="left:2713px;top:388.0px;font-size:23px;line-height:23px;color:#3483d2;font-weight:400;transform:scaleX(0.8629)">プライバシー ダッシュボード</div>
<div class="t" style="left:2713px;top:426.0px;font-size:23px;line-height:23px;color:#3483d2;font-weight:400;transform:scaleX(0.9542)">プライバシーに関する声明</div>
<div class="t" style="left:2713px;top:561.0px;font-size:23px;line-height:23px;color:#ffffff;font-weight:400;transform:scaleX(0.9714)">質問がありますか?</div>
<div class="t" style="left:2713px;top:631.0px;font-size:23px;line-height:23px;color:#3483d2;font-weight:400;transform:scaleX(0.9897)">Microsoft アカウントのプライバシー設定の</div>
<div class="t" style="left:2713px;top:668.0px;font-size:23px;line-height:23px;color:#3483d2;font-weight:400;transform:scaleX(1.1739)">管理</div>
<div class="t" style="left:2713px;top:721.0px;font-size:23px;line-height:23px;color:#3483d2;font-weight:400;transform:scaleX(0.9884)">プライバシー設定の変更</div>
<div class="t" style="left:2778px;top:856.0px;font-size:23px;line-height:23px;color:#3483d2;font-weight:400;transform:scaleX(0.9930)">ヘルプを表示</div>
<div class="t" style="left:2778px;top:917.0px;font-size:23px;line-height:23px;color:#3483d2;font-weight:400;transform:scaleX(0.8903)">フィードバックの送信</div>
<div class="t" style="left:178px;top:2108.0px;font-size:26px;line-height:26px;color:#e4e2dc;font-weight:400;transform:scaleX(0.9289)">ここに入力して検索</div>
<div class="t" style="left:3032px;top:2090.1px;font-size:22px;line-height:22px;color:#ffffff;font-weight:400;transform:scaleX(1.0170)">23:20</div>
<div class="t" style="left:3000px;top:2129.1px;font-size:22px;line-height:22px;color:#ffffff;font-weight:400;transform:scaleX(1.0717)">2021/02/01</div>
<script>(function(){var W=[44,60,131,125,285,54,110,368,227,213,225,109,58,59,246,52,157,82,99,140,109,107,444,858,801,40,858,71,40,872,20,40,479,40,353,469,174,110,273,271,197,452,54,256,141,211,222,56,118];var els=document.querySelectorAll("div.t");if(els.length!==W.length)return;var pr=document.createElement("span");pr.style.cssText="position:absolute;left:-9999px;top:0;font-family:Liberation Sans,sans-serif;font-size:100px;white-space:nowrap";pr.textContent="\u5168\u5168\u5168";document.body.appendChild(pr);var w1=pr.getBoundingClientRect().width;pr.textContent="\ue000\ue000\ue000";var w2=pr.getBoundingClientRect().width;document.body.removeChild(pr);var sy=(Math.abs(w1-w2)<0.5)?1.4:1;for(var i=0;i<els.length;i++){var e=els[i];var old=e.style.transform;e.style.transform="none";var r=document.createRange();r.selectNodeContents(e);var w=r.getBoundingClientRect().width;if(w>1){var s2=/[\u3000-\u9fff\uff00-\uffef]/.test(e.textContent)?sy:1;e.style.transform="scale("+(W[i]/w).toFixed(4)+","+s2+")";}else{e.style.transform=old;}}})();</script>
</body>
</html>
